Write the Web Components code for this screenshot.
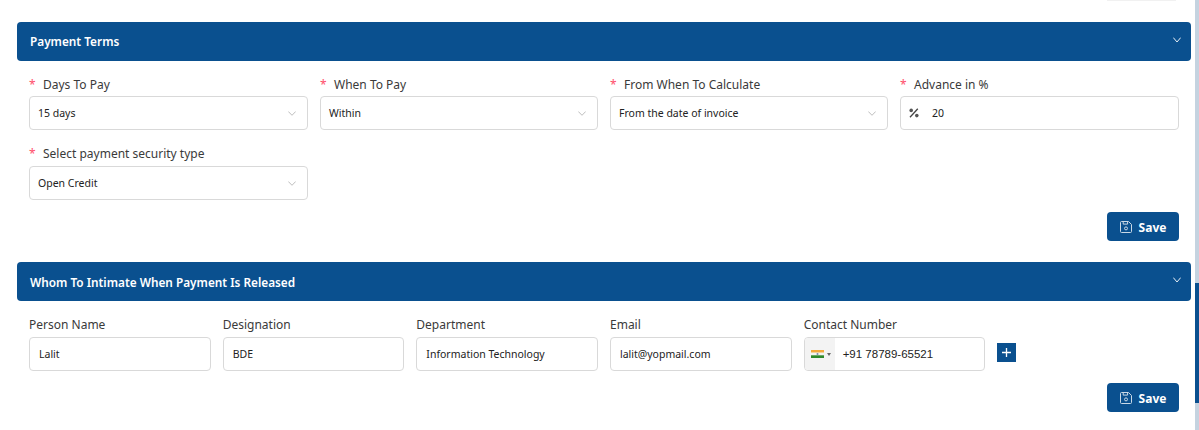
<!DOCTYPE html>
<html lang="en">
<head>
<meta charset="utf-8">
<title>Payment Terms</title>
<style>
  html, body { margin: 0; height: 100%; overflow: hidden; background: #fff; }
  body { font-family: "Noto Sans", "Open Sans", sans-serif; color: #2b2b2b; }
</style>
</head>
<body>
<app-page>
  <form-panel title="Payment Terms" style="--title-lift: 2px">
    <field-grid template="279px 278px 278px 279px">
      <form-field label="Days To Pay" required type="select" value="15 days" style="--label-gap: 5px"></form-field>
      <form-field label="When To Pay" required type="select" value="Within" style="--label-gap: 5px"></form-field>
      <form-field label="From When To Calculate" required type="select" value="From the date of invoice" style="--label-gap: 5px"></form-field>
      <form-field label="Advance in %" required type="percent" value="20" style="--label-gap: 5px"></form-field>
      <form-field label="Select payment security type" required type="select" value="Open Credit"></form-field>
    </field-grid>
    <save-button></save-button>
  </form-panel>
  <form-panel title="Whom To Intimate When Payment Is Released">
    <field-grid template="repeat(6, minmax(0, 1fr))">
      <form-field label="Person Name" value="Lalit"></form-field>
      <form-field label="Designation" value="BDE"></form-field>
      <form-field label="Department" value="Information Technology"></form-field>
      <form-field label="Email" value="lalit@yopmail.com"></form-field>
      <form-field label="Contact Number" type="phone" value="+91 78789-65521"></form-field>
      <add-button></add-button>
    </field-grid>
    <save-button></save-button>
  </form-panel>
</app-page>

<script>
class AppPage extends HTMLElement {
    connectedCallback() {
        this.attachShadow({ mode: 'open' });
        this.shadowRoot.innerHTML = `
            <style>
                :host { display: flex; width: 1199px; height: 430px; overflow: hidden; }
                .main { flex: 1; min-width: 0; padding: 0 4px 0 17px; }
                .stub { height: 1px; width: 69px; margin: 0 15px 0 auto; background: #f1f1f1; }
                .list { display: flex; flex-direction: column; gap: 21px; margin-top: 21px; }
                .track { width: 4px; background: #c5d3e0; padding-top: 283px; box-sizing: border-box; }
                .thumb { height: 120px; background: #0a508f; }
            </style>
            <div class="main">
                <div class="stub"></div>
                <div class="list"><slot></slot></div>
            </div>
            <div class="track"><div class="thumb"></div></div>
        `;
    }
}

class FormPanel extends HTMLElement {
    connectedCallback() {
        this.attachShadow({ mode: 'open' });
        this.shadowRoot.innerHTML = `
            <style>
                :host { display: block; }
                .head {
                    height: 39px;
                    box-sizing: border-box;
                    display: flex;
                    align-items: center;
                    justify-content: space-between;
                    padding: 0 10px 0 13px;
                    background: #0a508f;
                    border-radius: 4px;
                    color: #fff;
                    font-size: 11.8px;
                    font-weight: 600;
                }
                .head span { margin-bottom: var(--title-lift, 0); }
                .head svg { display: block; margin-top: -3px; }
                .body {
                    display: flex;
                    flex-direction: column;
                    padding: 16px 12px 0;
                }
            </style>
            <div class="head">
                <span>${this.getAttribute('title')}</span>
                <svg width="8" height="6" viewBox="0 0 8 6" fill="none" stroke="#e6eef5" stroke-width="1"><path d="M.3.6 4 5 7.7.6"/></svg>
            </div>
            <div class="body"><slot></slot></div>
        `;
    }
}

class FieldGrid extends HTMLElement {
    connectedCallback() {
        const template = this.getAttribute('template');
        this.attachShadow({ mode: 'open' });
        this.shadowRoot.innerHTML = `
            <style>
                :host {
                    display: grid;
                    grid-template-columns: ${template};
                    gap: 16px 12px;
                }
            </style>
            <slot></slot>
        `;
    }
}

class FormField extends HTMLElement {
    connectedCallback() {
        const type = this.getAttribute('type') || 'text';
        const label = this.getAttribute('label');
        const value = this.getAttribute('value');
        const star = this.hasAttribute('required') ? '<span class="star">*</span>' : '';

        let inner = `<span class="value">${value}</span>`;
        if (type === 'select') {
            inner = `<span class="value">${value}</span>
                <svg class="arrow" width="8" height="5" viewBox="0 0 8 5" fill="none" stroke="#bdbdbd" stroke-width="1"><path d="M.3.5 4 4.3 7.7.5"/></svg>`;
        } else if (type === 'percent') {
            inner = `<svg class="pct" width="10" height="10" viewBox="0 0 10 10"><path d="M1 9.2 8.8.8" stroke="#444" stroke-width="1.3" fill="none"/><circle cx="2.2" cy="2.4" r="1.8" fill="#555"/><circle cx="7.8" cy="7.6" r="1.8" fill="#555"/></svg>
                <span class="value">${value}</span>`;
        } else if (type === 'phone') {
            inner = `<span class="flag-box">
                    <svg width="13" height="8" viewBox="0 0 13 8"><rect width="13" height="2.7" fill="#f3a93a"/><rect y="2.7" width="13" height="2.6" fill="#f4f4f0"/><rect y="5.3" width="13" height="2.7" fill="#2f8a2c"/><circle cx="6.5" cy="4" r="1" fill="#7b86a8"/></svg>
                    <svg width="4" height="3" viewBox="0 0 4 3"><path d="M0 0h4L2 3z" fill="#666"/></svg>
                </span>
                <span class="phone">${value}</span>`;
        }

        this.attachShadow({ mode: 'open' });
        this.shadowRoot.innerHTML = `
            <style>
                :host { display: block; min-width: 0; }
                .label {
                    display: flex;
                    height: 14px;
                    margin-bottom: var(--label-gap, 6px);
                    align-items: center;
                    white-space: nowrap;
                    font-size: 12px;
                    color: #3a3a3a;
                }
                .star { color: #ff4d6a; width: 14px; font-size: 12px; }
                .box {
                    display: flex;
                    align-items: center;
                    height: 34px;
                    box-sizing: border-box;
                    padding: 0 9px 0 8px;
                    background: #fff;
                    border: 1px solid #d9d9d9;
                    border-radius: 4px;
                    font-size: 10.5px;
                    color: #222;
                    overflow: hidden;
                }
                .box.text { padding-left: 9px; }
                .box.phone-box { padding: 0; }
                .value { flex: 1; white-space: nowrap; }
                .arrow { flex: none; margin-right: 2px; }
                .pct { flex: none; margin-right: 13px; }
                .flag-box {
                    display: flex;
                    align-items: center;
                    gap: 3px;
                    width: 30px;
                    height: 100%;
                    box-sizing: border-box;
                    padding-left: 6px;
                    background: #f3f3f3;
                }
                .phone {
                    margin-left: 8px;
                    font-family: "Liberation Sans", Arial, sans-serif;
                    font-size: 11.5px;
                    color: #222;
                }
            </style>
            <div class="label">${star}<span>${label}</span></div>
            <div class="box ${type === 'text' ? 'text' : ''} ${type === 'phone' ? 'phone-box' : ''}">${inner}</div>
        `;
    }
}

class AddButton extends HTMLElement {
    connectedCallback() {
        this.attachShadow({ mode: 'open' });
        this.shadowRoot.innerHTML = `
            <style>
                :host { display: flex; align-items: center; height: 34px; margin-top: 18px; }
                button {
                    display: flex;
                    align-items: center;
                    justify-content: center;
                    width: 19px;
                    height: 19px;
                    padding: 0;
                    border: 0;
                    background: #0a508f;
                }
            </style>
            <button type="button" aria-label="Add">
                <svg width="9" height="9" viewBox="0 0 9 9" stroke="#fff" stroke-width="1.3"><path d="M4.5 0v9M0 4.5h9"/></svg>
            </button>
        `;
    }
}

class SaveButton extends HTMLElement {
    connectedCallback() {
        this.attachShadow({ mode: 'open' });
        this.shadowRoot.innerHTML = `
            <style>
                :host { display: block; align-self: flex-end; margin-top: 12px; }
                button {
                    display: flex;
                    align-items: center;
                    justify-content: center;
                    gap: 7px;
                    width: 72px;
                    height: 29px;
                    padding: 0;
                    border: 0;
                    border-radius: 4px;
                    background: #0a508f;
                    color: #fff;
                    font: 700 12px "Noto Sans", "Open Sans", sans-serif;
                }
                span { padding-top: 1px; }
                svg { display: block; }
            </style>
            <button type="button">
                <svg width="12" height="12" viewBox="0 0 12 12" fill="none" stroke="#c9d8e6" stroke-width="1"><path d="M1.5.5h7l3 3v7a1 1 0 0 1-1 1h-9a1 1 0 0 1-1-1v-9a1 1 0 0 1 1-1z"/><path d="M3.2.5v2.6h4.4V.5"/><circle cx="6" cy="7.4" r="1.5"/></svg>
                <span>Save</span>
            </button>
        `;
    }
}

customElements.define('app-page', AppPage);
customElements.define('form-panel', FormPanel);
customElements.define('field-grid', FieldGrid);
customElements.define('form-field', FormField);
customElements.define('add-button', AddButton);
customElements.define('save-button', SaveButton);
</script>
</body>
</html>
